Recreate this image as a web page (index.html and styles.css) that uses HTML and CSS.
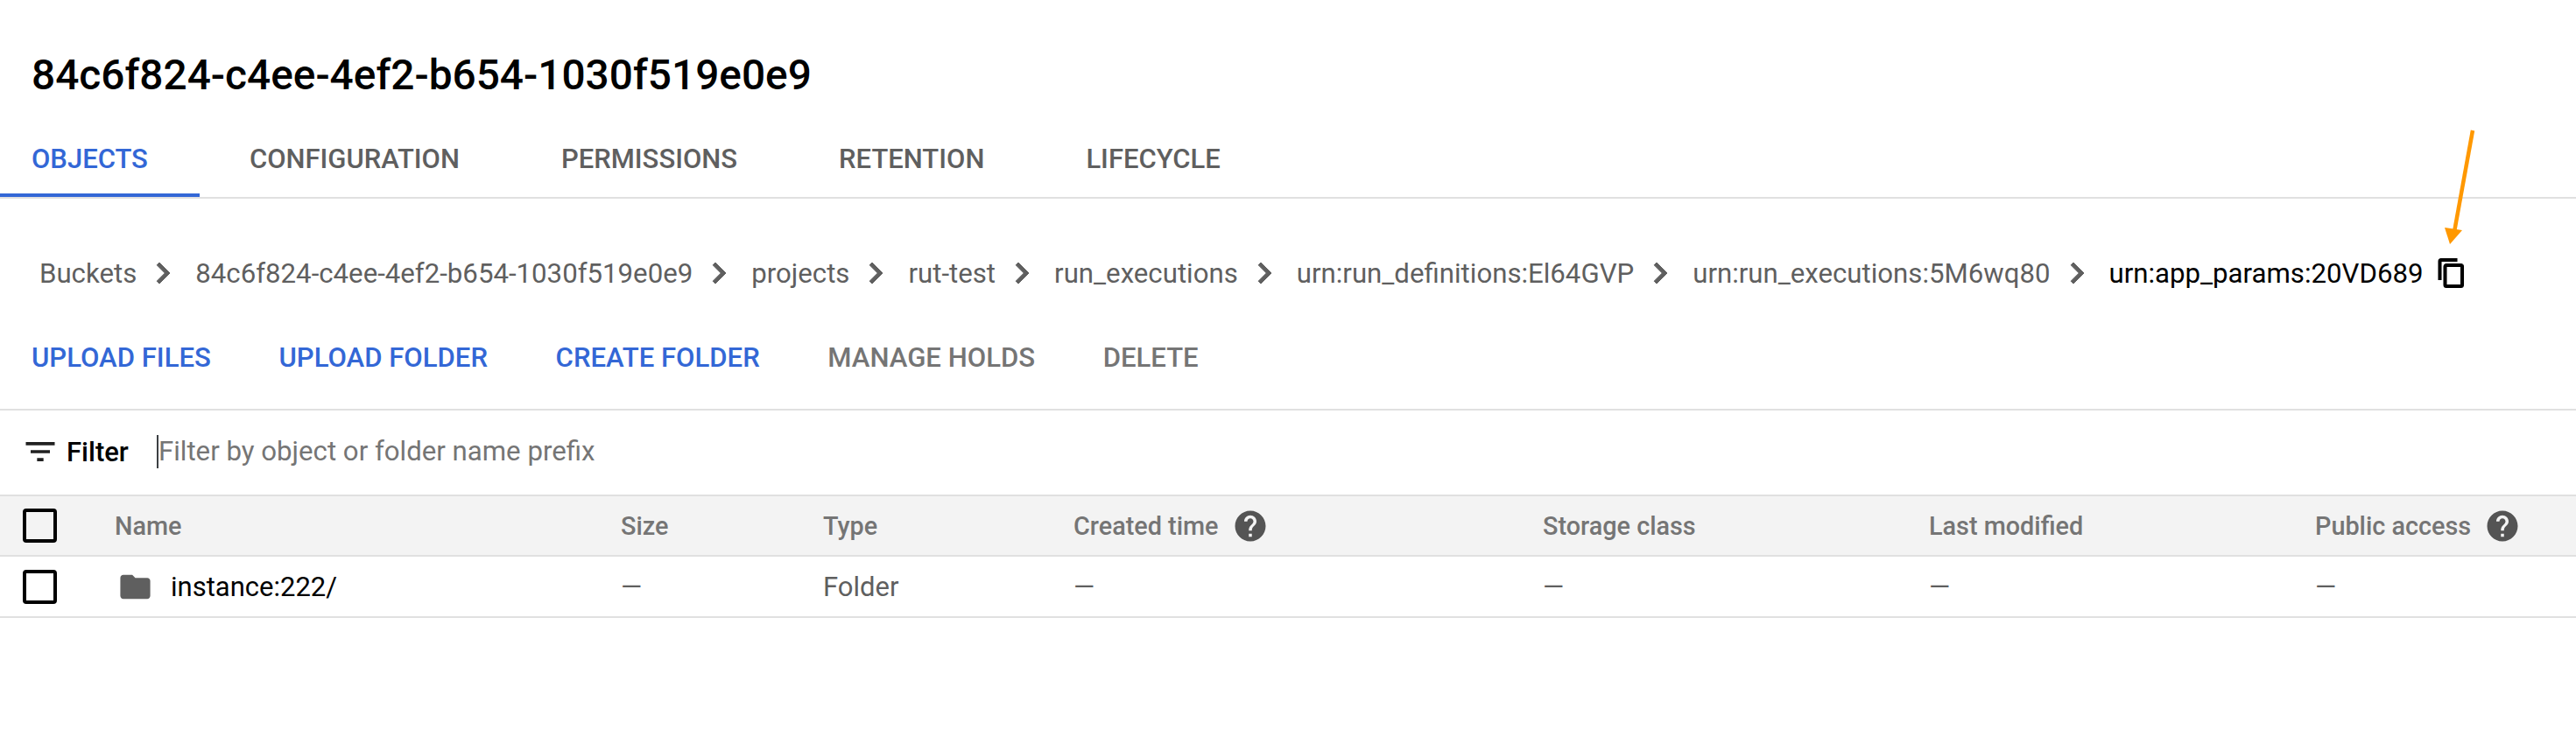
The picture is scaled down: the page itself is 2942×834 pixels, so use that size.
FILE: index.html
```html
<!DOCTYPE html>
<html lang="en">
<head>
    <meta charset="UTF-8">
    <title>Bucket details</title>
    <link rel="stylesheet" href="styles.css">
</head>
<body>
    <h1 class="title">84c6f824-c4ee-4ef2-b654-1030f519e0e9</h1>

    <nav class="tabs">
        <a class="tab active">OBJECTS</a>
        <a class="tab">CONFIGURATION</a>
        <a class="tab">PERMISSIONS</a>
        <a class="tab">RETENTION</a>
        <a class="tab">LIFECYCLE</a>
    </nav>

    <div class="breadcrumb">
        <span class="crumb">Buckets</span>
        <svg class="chevron" viewBox="0 0 24 24"><path d="M10 6L8.59 7.41 13.17 12l-4.58 4.59L10 18l6-6z"/></svg>
        <span class="crumb">84c6f824-c4ee-4ef2-b654-1030f519e0e9</span>
        <svg class="chevron" viewBox="0 0 24 24"><path d="M10 6L8.59 7.41 13.17 12l-4.58 4.59L10 18l6-6z"/></svg>
        <span class="crumb">projects</span>
        <svg class="chevron" viewBox="0 0 24 24"><path d="M10 6L8.59 7.41 13.17 12l-4.58 4.59L10 18l6-6z"/></svg>
        <span class="crumb">rut-test</span>
        <svg class="chevron" viewBox="0 0 24 24"><path d="M10 6L8.59 7.41 13.17 12l-4.58 4.59L10 18l6-6z"/></svg>
        <span class="crumb">run_executions</span>
        <svg class="chevron" viewBox="0 0 24 24"><path d="M10 6L8.59 7.41 13.17 12l-4.58 4.59L10 18l6-6z"/></svg>
        <span class="crumb">urn:run_definitions:El64GVP</span>
        <svg class="chevron" viewBox="0 0 24 24"><path d="M10 6L8.59 7.41 13.17 12l-4.58 4.59L10 18l6-6z"/></svg>
        <span class="crumb">urn:run_executions:5M6wq80</span>
        <svg class="chevron" viewBox="0 0 24 24"><path d="M10 6L8.59 7.41 13.17 12l-4.58 4.59L10 18l6-6z"/></svg>
        <span class="crumb current">urn:app_params:20VD689</span>
        <svg class="copy" viewBox="0 0 24 24"><path d="M16 1H4c-1.1 0-2 .9-2 2v14h2V3h12V1zm3 4H8c-1.1 0-2 .9-2 2v14c0 1.1.9 2 2 2h11c1.1 0 2-.9 2-2V7c0-1.1-.9-2-2-2zm0 16H8V7h11v14z"/></svg>
    </div>

    <div class="actions">
        <a class="action">UPLOAD FILES</a>
        <a class="action">UPLOAD FOLDER</a>
        <a class="action">CREATE FOLDER</a>
        <a class="action disabled">MANAGE HOLDS</a>
        <a class="action disabled">DELETE</a>
    </div>

    <div class="filter">
        <svg class="filter-icon" viewBox="0 0 24 24"><path d="M10 18h4v-2h-4v2zM3 6v2h18V6H3zm3 7h12v-2H6v2z"/></svg>
        <span class="filter-label">Filter</span>
        <span class="filter-input">Filter by object or folder name prefix</span>
    </div>

    <table class="objects">
        <colgroup>
            <col class="col-check">
            <col class="col-name">
            <col class="col-size">
            <col class="col-type">
            <col class="col-created">
            <col class="col-storage">
            <col class="col-modified">
            <col>
        </colgroup>
        <thead>
            <tr>
                <th><span class="checkbox"></span></th>
                <th>Name</th>
                <th>Size</th>
                <th>Type</th>
                <th>
                    <span class="with-help">Created time
                        <svg class="help" viewBox="0 0 24 24"><path d="M12 2C6.48 2 2 6.48 2 12s4.48 10 10 10 10-4.48 10-10S17.52 2 12 2zm1 17h-2v-2h2v2zm2.07-7.75l-.9.92C13.45 12.9 13 13.5 13 15h-2v-.5c0-1.1.45-2.1 1.17-2.83l1.24-1.26c.37-.36.59-.86.59-1.41 0-1.1-.9-2-2-2s-2 .9-2 2H8c0-2.21 1.79-4 4-4s4 1.79 4 4c0 .88-.36 1.68-.93 2.25z"/></svg>
                    </span>
                </th>
                <th>Storage class</th>
                <th>Last modified</th>
                <th>
                    <span class="with-help">Public access
                        <svg class="help" viewBox="0 0 24 24"><path d="M12 2C6.48 2 2 6.48 2 12s4.48 10 10 10 10-4.48 10-10S17.52 2 12 2zm1 17h-2v-2h2v2zm2.07-7.75l-.9.92C13.45 12.9 13 13.5 13 15h-2v-.5c0-1.1.45-2.1 1.17-2.83l1.24-1.26c.37-.36.59-.86.59-1.41 0-1.1-.9-2-2-2s-2 .9-2 2H8c0-2.21 1.79-4 4-4s4 1.79 4 4c0 .88-.36 1.68-.93 2.25z"/></svg>
                    </span>
                </th>
            </tr>
        </thead>
        <tbody>
            <tr>
                <td><span class="checkbox"></span></td>
                <td>
                    <span class="object-name">
                        <svg class="folder" viewBox="0 0 24 24"><path d="M10 4H4c-1.1 0-1.99.9-1.99 2L2 18c0 1.1.9 2 2 2h16c1.1 0 2-.9 2-2V8c0-1.1-.9-2-2-2h-8l-2-2z"/></svg>
                        instance:222/
                    </span>
                </td>
                <td>—</td>
                <td>Folder</td>
                <td>—</td>
                <td>—</td>
                <td>—</td>
                <td>—</td>
            </tr>
        </tbody>
    </table>

    <!-- annotation drawn on top of the screenshot -->
    <svg class="arrow" width="40" height="140" viewBox="0 0 40 140">
        <line x1="33" y1="4" x2="12" y2="120" stroke="#ff9800" stroke-width="4.5"/>
        <polygon points="1,115 21,118 7,134" fill="#ff9800"/>
    </svg>
</body>
</html>
```

FILE: styles.css
```css
/* General page styles */
body {
    margin: 0;
    font-family: Roboto, 'Liberation Sans', sans-serif;
    background-color: #ffffff;
    color: #000000;
    position: relative;
}
.title {
    margin: 0;
    height: 137px;
    padding: 60px 0 0 36px;
    box-sizing: border-box;
    font-size: 47.8px;
    line-height: 52px;
    font-weight: 500;
}
/* Tabs */
.tabs {
    display: flex;
    height: 88px;
    border-bottom: 2px solid #e0e0e0;
}
.tab {
    display: flex;
    align-items: center;
    padding: 0 58px;
    font-size: 31px;
    font-weight: 500;
    color: #5f5f5f;
}
.tab.active {
    padding-left: 36px;
    padding-right: 59px;
    margin-right: -1px;
    color: #3367d6;
    box-shadow: inset 0 -4px 0 #3367d6;
}
/* Breadcrumb row */
.breadcrumb {
    display: flex;
    align-items: center;
    height: 70px;
    margin-top: 50px;
    padding-bottom: 2px;
    padding-left: 45px;
    font-size: 31.2px;
    color: #5f5f5f;
}
.chevron {
    width: 48px;
    height: 48px;
    margin: 0 13px 0 6px;
    fill: #5f5f5f;
    stroke: #5f5f5f;
    stroke-width: 0.5;
    flex-shrink: 0;
}
.crumb.current {
    color: #000000;
}
.copy {
    width: 36px;
    height: 36px;
    margin-left: 15px;
    fill: #000000;
    stroke: #000000;
    stroke-width: 0.7;
}
/* Action buttons */
.actions {
    display: flex;
    align-items: center;
    gap: 77.6px;
    height: 118px;
    padding-left: 36px;
    border-bottom: 2px solid #e0e0e0;
}
.action {
    font-size: 31.1px;
    font-weight: 500;
    color: #3367d6;
}
.action.disabled {
    color: #757575;
}
/* Filter bar */
.filter {
    display: flex;
    align-items: center;
    height: 94px;
    padding-bottom: 2px;
    padding-left: 24px;
}
.filter-icon {
    width: 44px;
    height: 44px;
    fill: #212121;
}
.filter-label {
    width: 103px;
    margin-left: 8px;
    font-size: 31px;
    font-weight: 500;
}
.filter-input {
    border-left: 2px solid #3c4043;
    line-height: 38px;
    font-size: 31.2px;
    color: #757575;
}
/* Objects table */
.objects {
    width: 100%;
    table-layout: fixed;
    border-collapse: separate;
    border-spacing: 0;
    font-size: 31px;
}
.col-check { width: 131px; }
.col-name { width: 578px; }
.col-size { width: 231px; }
.col-type { width: 286px; }
.col-created { width: 536px; }
.col-storage { width: 441px; }
.col-modified { width: 441px; }
.objects th {
    height: 67px;
    padding: 0;
    text-align: left;
    font-size: 28.8px;
    font-weight: 500;
    color: #757575;
    background-color: #f3f3f3;
    border-top: 2px solid #e0e0e0;
    border-bottom: 2px solid #e0e0e0;
}
.objects td {
    height: 68px;
    padding: 0;
    color: #5f5f5f;
    border-bottom: 2px solid #e0e0e0;
}
.checkbox {
    display: block;
    width: 31px;
    height: 31px;
    margin-left: 26px;
    border: 4px solid #000000;
    border-radius: 4px;
}
.with-help {
    display: flex;
    align-items: center;
    gap: 15px;
}
.help {
    width: 42px;
    height: 42px;
    fill: #545454;
}
.object-name {
    display: flex;
    align-items: center;
    gap: 20px;
    padding-left: 3px;
    color: #000000;
}
.folder {
    width: 41px;
    height: 41px;
    fill: #5f5f5f;
}
/* Orange annotation arrow */
.arrow {
    position: absolute;
    left: 2791px;
    top: 145px;
}
```
